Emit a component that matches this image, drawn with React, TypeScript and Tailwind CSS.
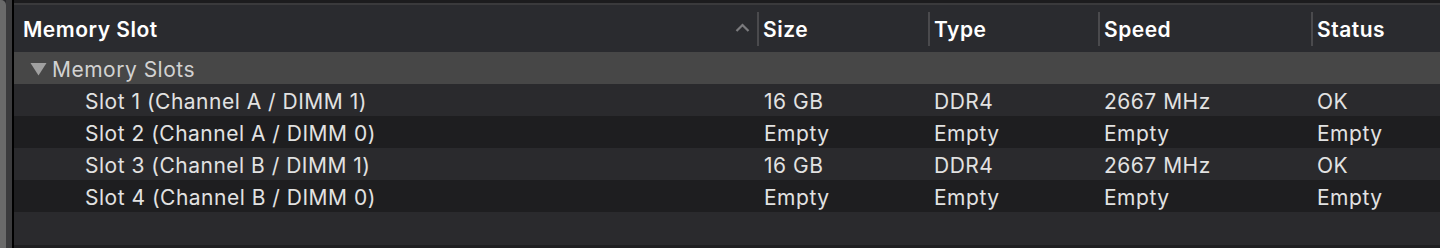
const ROWS = [
  { slot: "Slot 1 (Channel A / DIMM 1)", size: "16 GB", type: "DDR4", speed: "2667 MHz", status: "OK" },
  { slot: "Slot 2 (Channel A / DIMM 0)", size: "Empty", type: "Empty", speed: "Empty", status: "Empty" },
  { slot: "Slot 3 (Channel B / DIMM 1)", size: "16 GB", type: "DDR4", speed: "2667 MHz", status: "OK" },
  { slot: "Slot 4 (Channel B / DIMM 0)", size: "Empty", type: "Empty", speed: "Empty", status: "Empty" },
];

const font = { fontFamily: "Inter, 'Liberation Sans', sans-serif" };

export default function App() {
  return (
    <div className="flex h-[248px] w-[1440px] bg-[#2a2a2d] overflow-hidden" style={font}>
      {/* sidebar edge */}
      <div className="w-[6px] h-full bg-[#6a6a6a] rounded-tr-[5px]" />
      <div className="w-[6px] h-full bg-[#3b3b3d]" />
      <div className="w-[2px] h-full bg-black" />

      <div className="flex-1 flex flex-col">
        <div className="h-[3px] bg-[#1c1c1e]" />
        <div className="h-[2px] bg-[#3a3a3c]" />

        {/* header */}
        <div className="flex h-[47px] items-center bg-[#2a2b2f] text-white font-semibold text-[21px] tracking-[0.5px]">
          <div className="w-[743px] pl-[9px] flex items-center justify-between pr-[7px] pt-[3px]">
            <span>Memory Slot</span>
            <svg width="15" height="10" viewBox="0 0 15 10" className="-mt-[4px]">
              <path d="M1.5 8 L7.5 2 L13.5 8" stroke="#7b7b7e" strokeWidth="2.2" fill="none" />
            </svg>
          </div>
          <HeaderCell w="w-[171px]" label="Size" />
          <HeaderCell w="w-[170px]" label="Type" />
          <HeaderCell w="w-[213px]" label="Speed" />
          <HeaderCell w="flex-1" label="Status" />
        </div>

        {/* group row */}
        <div className="flex h-[32px] items-center bg-[#474747] text-[#d2d2d2] text-[21px] tracking-[0.5px] pl-[16px] pt-[3px]">
          <svg width="17" height="14" viewBox="0 0 17 14" className="mr-[5px] -mt-[2px]">
            <path d="M0.5 1 L16.5 1 L8.5 13.5 Z" fill="#a0a0a0" />
          </svg>
          <span>Memory Slots</span>
        </div>

        {ROWS.map((r, i) => (
          <div
            key={r.slot}
            className={`flex h-[32px] items-center pt-[3px] text-[21px] tracking-[0.5px] text-[#e2e2e2] ${i % 2 === 0 ? "bg-[#2a2a2d]" : "bg-[#1e1e20]"}`}
          >
            <div className="w-[750px] pl-[71px]">{r.slot}</div>
            <div className="w-[170px]">{r.size}</div>
            <div className="w-[170px]">{r.type}</div>
            <div className="w-[213px]">{r.speed}</div>
            <div className="flex-1">{r.status}</div>
          </div>
        ))}

        <div className="flex-1 bg-[#2a2a2d] border-b-[3px] border-[#1f1f21]" />
      </div>
    </div>
  );
}

function HeaderCell({ w, label }: { w: string; label: string }) {
  return (
    <div className={`${w} flex items-center h-full`}>
      <div className="w-[2px] h-[34px] bg-[#4a4a4d] mr-[4px]" />
      <span className="pt-[3px]">{label}</span>
    </div>
  );
}
